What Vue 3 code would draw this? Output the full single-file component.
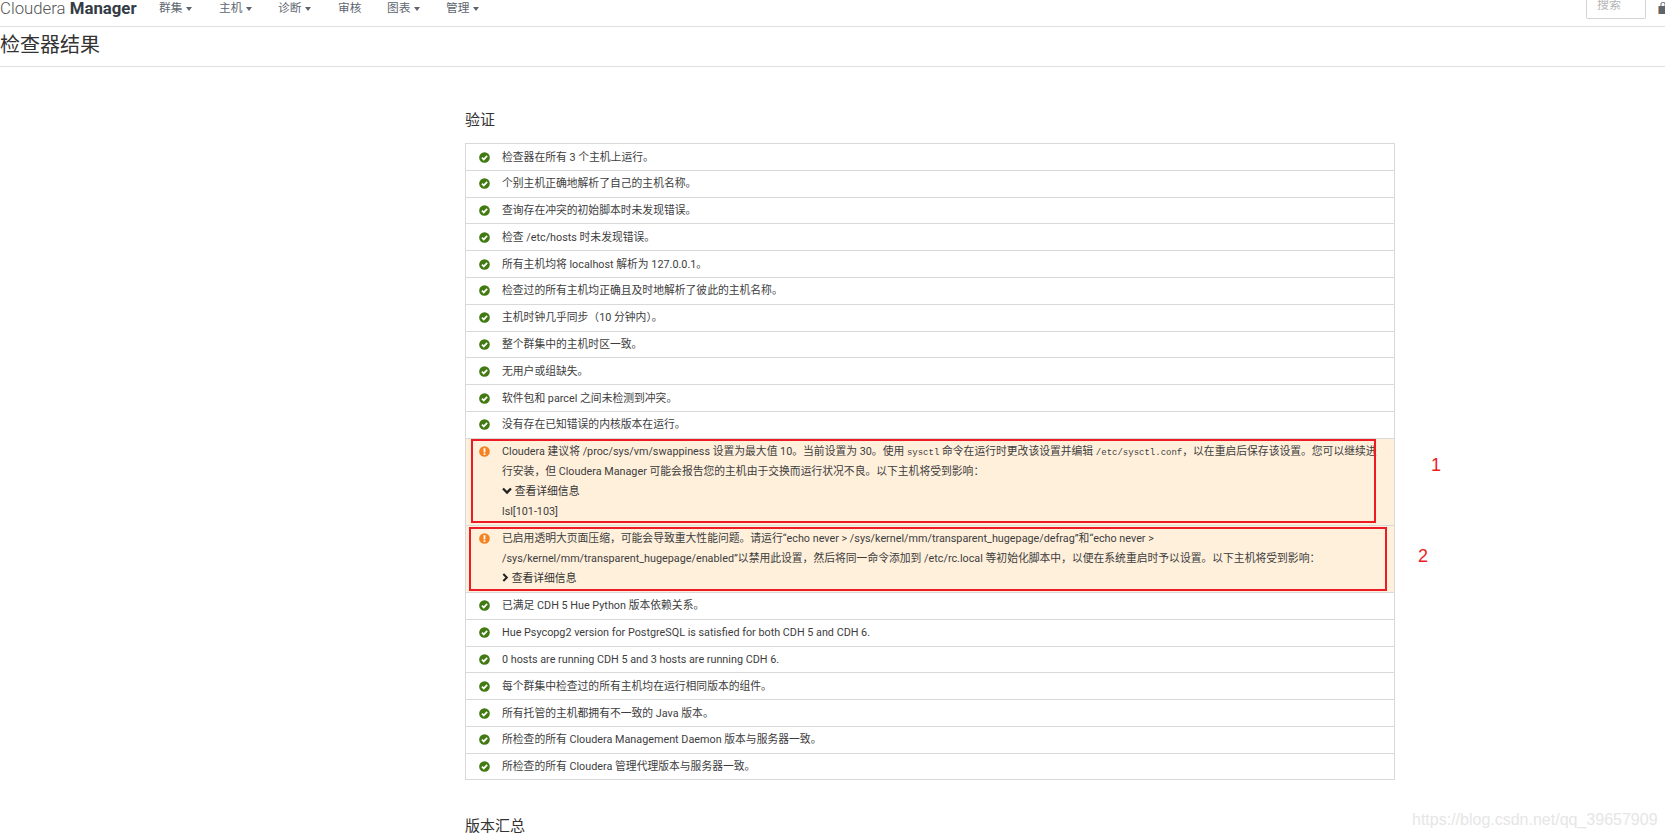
<template>
  <div class="page">
    <header class="topbar">
      <div class="brand">Cloudera <b>Manager</b></div>
      <ul class="menu">
        <li v-for="item in menu" :key="item.name" :style="{ width: item.width + 'px' }">
          {{ item.name }}<i v-if="item.caret" class="caret"></i>
        </li>
      </ul>
      <div class="search">搜索</div>
      <svg class="lock" width="10" height="12" viewBox="0 0 10 12">
        <path d="M3 4V2.4a2 2 0 0 1 4 0V4" fill="none" stroke="#8a8f96" stroke-width="1.3" />
        <rect x="0" y="4" width="10" height="8" fill="#5c6670" />
        <rect x="0" y="4" width="1" height="8" fill="#e8a15c" />
      </svg>
    </header>

    <div class="title-bar">
      <h1>检查器结果</h1>
    </div>

    <main class="content">
      <h2>验证</h2>
      <ul class="results">
        <li v-for="row in before" :key="row" class="row">
          <svg class="icon" viewBox="0 0 12 12">
            <circle cx="6" cy="6" r="5.8" fill="#427a12" />
            <path d="M3.2 6.2 5.2 8.1 8.9 4.2" fill="none" stroke="#fff" stroke-width="1.9" />
          </svg>
          <div class="text">{{ row }}</div>
        </li>

        <li class="row warn">
          <svg class="icon" viewBox="0 0 12 12">
            <circle cx="6" cy="6" r="5.8" fill="#f58220" />
            <rect x="5" y="2.4" width="2" height="4.6" fill="#fff" />
            <rect x="5" y="8" width="2" height="1.8" fill="#fff" />
          </svg>
          <div class="text">
            Cloudera 建议将 /proc/sys/vm/swappiness 设置为最大值 10。当前设置为 30。使用 <code>sysctl</code> 命令在运行时更改该设置并编辑 <code>/etc/sysctl.conf</code>，以在重启后保存该设置。您可以继续进行安装，但 Cloudera Manager 可能会报告您的主机由于交换而运行状况不良。以下主机将受到影响：
            <div class="details">
              <svg class="chevron" viewBox="0 0 10 8"><path d="M1 1.5 5 5.5 9 1.5" fill="none" stroke="#222" stroke-width="2.3" /></svg>
              查看详细信息
            </div>
            <div>lsl[101-103]</div>
          </div>
        </li>

        <li class="row warn">
          <svg class="icon" viewBox="0 0 12 12">
            <circle cx="6" cy="6" r="5.8" fill="#f58220" />
            <rect x="5" y="2.4" width="2" height="4.6" fill="#fff" />
            <rect x="5" y="8" width="2" height="1.8" fill="#fff" />
          </svg>
          <div class="text">
            已启用透明大页面压缩，可能会导致重大性能问题。请运行“echo never &gt; /sys/kernel/mm/transparent_hugepage/defrag”和“echo never &gt;<br />
            /sys/kernel/mm/transparent_hugepage/enabled”以禁用此设置，然后将同一命令添加到 /etc/rc.local 等初始化脚本中，以便在系统重启时予以设置。以下主机将受到影响：
            <div class="details">
              <svg class="chevron right" viewBox="0 0 8 10"><path d="M1.5 1 5.5 5 1.5 9" fill="none" stroke="#222" stroke-width="2.3" /></svg>
              查看详细信息
            </div>
          </div>
        </li>

        <li v-for="row in after" :key="row" class="row">
          <svg class="icon" viewBox="0 0 12 12">
            <circle cx="6" cy="6" r="5.8" fill="#427a12" />
            <path d="M3.2 6.2 5.2 8.1 8.9 4.2" fill="none" stroke="#fff" stroke-width="1.9" />
          </svg>
          <div class="text">{{ row }}</div>
        </li>
      </ul>
      <h2 class="next">版本汇总</h2>
    </main>

    <!-- red annotations drawn on top of the screenshot -->
    <div class="mark mark-one"></div>
    <div class="mark mark-two"></div>
    <span class="mark-no no-one">1</span>
    <span class="mark-no no-two">2</span>
    <span class="watermark">https://blog.csdn.net/qq_39657909</span>
  </div>
</template>

<script setup>
const menu = [
  { name: '群集', width: 60, caret: true },
  { name: '主机', width: 59, caret: true },
  { name: '诊断', width: 60, caret: true },
  { name: '审核', width: 49 },
  { name: '图表', width: 59, caret: true },
  { name: '管理', width: 60, caret: true }
]

const before = [
  '检查器在所有 3 个主机上运行。',
  '个别主机正确地解析了自己的主机名称。',
  '查询存在冲突的初始脚本时未发现错误。',
  '检查 /etc/hosts 时未发现错误。',
  '所有主机均将 localhost 解析为 127.0.0.1。',
  '检查过的所有主机均正确且及时地解析了彼此的主机名称。',
  '主机时钟几乎同步（10 分钟内）。',
  '整个群集中的主机时区一致。',
  '无用户或组缺失。',
  '软件包和 parcel 之间未检测到冲突。',
  '没有存在已知错误的内核版本在运行。'
]

const after = [
  '已满足 CDH 5 Hue Python 版本依赖关系。',
  'Hue Psycopg2 version for PostgreSQL is satisfied for both CDH 5 and CDH 6.',
  '0 hosts are running CDH 5 and 3 hosts are running CDH 6.',
  '每个群集中检查过的所有主机均在运行相同版本的组件。',
  '所有托管的主机都拥有不一致的 Java 版本。',
  '所检查的所有 Cloudera Management Daemon 版本与服务器一致。',
  '所检查的所有 Cloudera 管理代理版本与服务器一致。'
]
</script>

<style>
html,
body {
  margin: 0;
  background: #fff;
  overflow: hidden;
}
</style>

<style scoped>
.page {
  position: relative;
  width: 1665px;
  height: 839px;
  overflow: hidden;
  font-family: Roboto, "Noto Sans CJK SC", sans-serif;
  font-size: 10.8px;
  color: #3d3d3d;
}

/* TOP BAR */
.topbar {
  display: flex;
  align-items: flex-start;
  height: 26px;
  border-bottom: 1px solid #e0e0e0;
}

.brand {
  width: 159px;
  flex: none;
  font-size: 16.8px;
  line-height: 16px;
  color: #555;
  font-weight: 300;
}

.brand b {
  font-weight: 700;
  color: #333c45;
}

.menu {
  display: flex;
  list-style: none;
  margin: 0;
  padding: 0;
  flex: 1;
}

.menu li {
  font-size: 11.7px;
  line-height: 16px;
  color: #5d6670;
}

.caret {
  display: inline-block;
  margin-left: 4px;
  vertical-align: middle;
  border-top: 4px solid #5d6670;
  border-left: 3px solid transparent;
  border-right: 3px solid transparent;
}

.search {
  flex: none;
  width: 60px;
  height: 19px;
  box-sizing: border-box;
  margin-right: 12px;
  padding-left: 10px;
  border: 1px solid #d5d5d5;
  border-top: none;
  border-radius: 0 0 2px 2px;
  font-size: 12px;
  color: #b5b5b5;
  line-height: 11px;
}

.lock {
  flex: none;
  margin-top: 2px;
  margin-right: -3px;
}

/* TITLE */
.title-bar {
  height: 39px;
  border-bottom: 1px solid #e0e0e0;
}

h1 {
  margin: 0;
  font-size: 20px;
  font-weight: 400;
  line-height: 37px;
  color: #333;
}

/* CONTENT */
.content {
  width: 930px;
  margin-left: 465px;
}

h2 {
  margin: 0;
  padding-top: 42px;
  font-size: 15px;
  font-weight: 400;
  line-height: 22px;
  color: #333;
}

h2.next {
  padding-top: 35px;
}

.results {
  list-style: none;
  margin: 12px 0 0;
  padding: 0;
  border: 1px solid #d9d9d9;
  border-bottom: none;
}

.row {
  display: flex;
  padding: 3.5px 0 2.5px 13px;
  line-height: 19.8px;
  border-bottom: 1px solid #d9d9d9;
}

.row.warn {
  background: #fff0dc;
  padding-top: 3.4px;
  padding-bottom: 3.4px;
}

.icon {
  flex: none;
  width: 11px;
  height: 11px;
  margin-top: 4px;
}

.text {
  margin-left: 12px;
  padding-right: 10px;
}

code {
  font-family: "Liberation Mono", monospace;
  font-size: 9px;
  line-height: 1;
}

.details {
  color: #333;
}

.chevron {
  width: 10px;
  height: 8px;
}

.chevron.right {
  width: 7px;
  height: 9px;
}

/* ANNOTATIONS */
.mark {
  position: absolute;
  box-sizing: border-box;
  border: 2px solid #ed1c24;
}

.mark-one {
  left: 471px;
  top: 439px;
  width: 905px;
  height: 84px;
}

.mark-two {
  left: 469px;
  top: 527px;
  width: 918px;
  height: 64px;
}

.mark-no {
  position: absolute;
  font-family: "Liberation Sans", sans-serif;
  font-size: 18px;
  color: #ed1c24;
}

.no-one {
  left: 1431px;
  top: 455px;
}

.no-two {
  left: 1418px;
  top: 546px;
}

.watermark {
  position: absolute;
  left: 1412px;
  top: 811px;
  font-family: "Liberation Sans", sans-serif;
  font-size: 16px;
  color: #e6e6e6;
}
</style>
